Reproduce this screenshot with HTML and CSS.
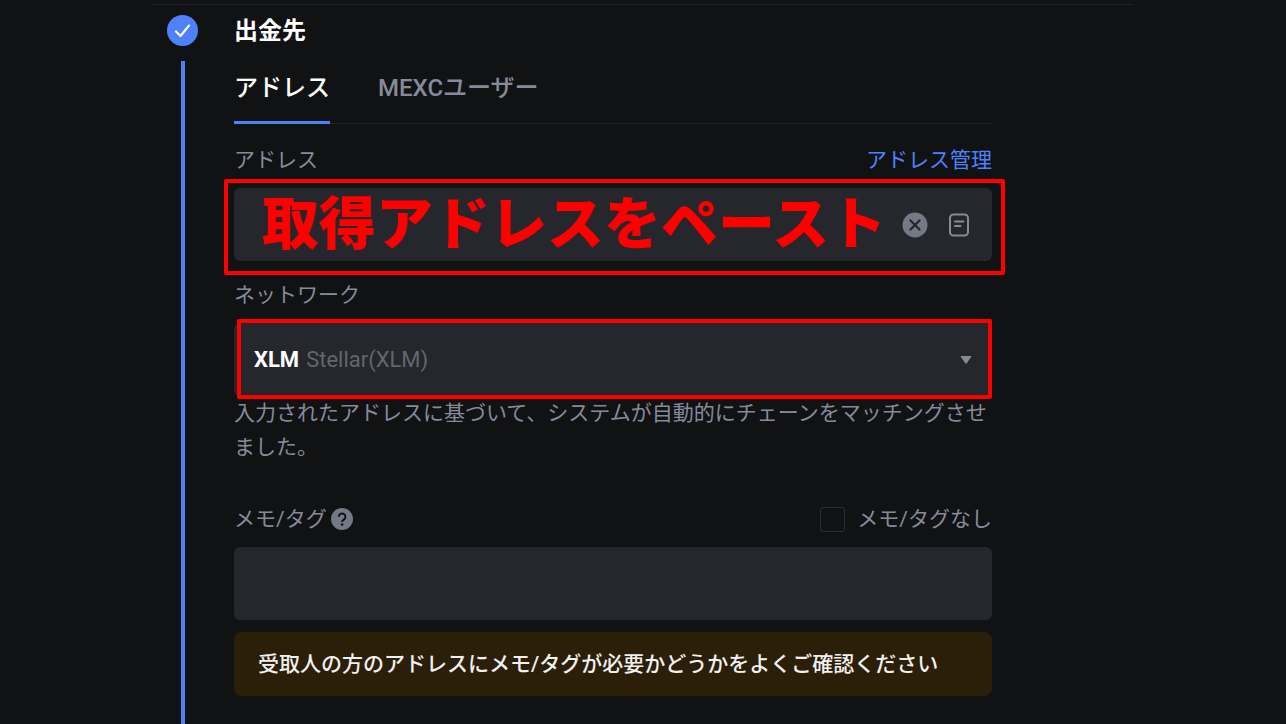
FILE: index.html
```html
<!DOCTYPE html>
<html lang="ja">
<head>
  <meta charset="UTF-8">
  <meta name="viewport" content="width=device-width, initial-scale=1">
  <title>出金</title>
  <link rel="stylesheet" href="styles.css">
</head>
<body>

<main class="page">
  <section class="step">
    <div class="rail">
      <svg class="step-icon" viewBox="0 0 31 31" aria-hidden="true">
        <circle cx="15.5" cy="15.5" r="15.5" fill="#4f81fb"/>
        <path d="M9 16.500l4.500 4.500L22 10.500" fill="none" stroke="#fff" stroke-width="2.100" stroke-linecap="round" stroke-linejoin="round"/>
      </svg>
      <div class="line"></div>
    </div>

    <form class="content">
      <h2>出金先</h2>

      <div class="tabs" role="tablist">
        <button type="button" role="tab" aria-selected="true" class="tab active">アドレス</button>
        <button type="button" role="tab" aria-selected="false" class="tab">MEXCユーザー</button>
      </div>

      <div class="label-row">
        <label for="address">アドレス</label>
        <a href="#">アドレス管理</a>
      </div>
      <div class="field marked marked-wide">
        <input type="text" id="address" class="address-input" value="取得アドレスをペースト">
        <button type="button" class="icon-btn" aria-label="クリア">
          <svg width="26" height="26" viewBox="0 0 26 26">
            <circle cx="13" cy="13" r="12.500" fill="#747986"/>
            <path d="M8.500 8.500l9 9M17.500 8.500l-9 9" stroke="#26272c" stroke-width="2.300" stroke-linecap="round"/>
          </svg>
        </button>
        <button type="button" class="icon-btn" aria-label="アドレス帳">
          <svg width="26" height="26" viewBox="0 0 26 26" fill="none" stroke="#868b99" stroke-width="2" stroke-linecap="round">
            <rect x="4" y="2.500" width="18" height="21" rx="3.500"/>
            <path d="M9 9.500h8.500M9 14h5.500"/>
          </svg>
        </button>
      </div>

      <div class="label-row">
        <label for="network">ネットワーク</label>
      </div>
      <div class="field marked">
        <span class="coin">XLM</span>
        <select id="network" class="network-select">
          <option>Stellar(XLM)</option>
        </select>
        <svg class="arrow" width="12" height="8" viewBox="0 0 12 8" aria-hidden="true">
          <path d="M1 .5h10L6 7.500z" fill="#868b99" stroke="#868b99" stroke-linejoin="round"/>
        </svg>
      </div>
      <p class="hint">入力されたアドレスに基づいて、システムが自動的にチェーンをマッチングさせました。</p>

      <div class="label-row">
        <div class="memo-label">
          <label for="memo">メモ/タグ</label>
          <svg width="22" height="22" viewBox="0 0 22 22" aria-hidden="true">
            <circle cx="11" cy="11" r="11" fill="#747986"/>
            <path d="M7.800 8.800a3.300 3.300 0 1 1 5 2.800c-1.200.8-1.700 1.200-1.700 2.300" fill="none" stroke="#111214" stroke-width="2"/>
            <circle cx="11.100" cy="16.600" r="1.300" fill="#111214"/>
          </svg>
        </div>
        <label class="no-memo"><input type="checkbox">メモ/タグなし</label>
      </div>
      <div class="field">
        <input type="text" id="memo">
      </div>

      <p class="warning">受取人の方のアドレスにメモ/タグが必要かどうかをよくご確認ください</p>
    </form>
  </section>
</main>

</body>
</html>
```
FILE: styles.css
```css
* {
  box-sizing: border-box;
}
body {
  margin: 0;
  background-color: #111214;
  color: #858b9b;
  font-family: Roboto, "Noto Sans CJK JP", sans-serif;
  font-size: 21px;
  line-height: 30px;
}
h2, p {
  margin: 0;
}
button, input, select {
  font: inherit;
  color: inherit;
  background: none;
  border: none;
  padding: 0;
  margin: 0;
  outline: none;
}
button {
  cursor: pointer;
}
.page {
  max-width: 982px;
  margin: 0 auto;
  padding-top: 4px;
}
.step {
  display: flex;
  gap: 36px;
  min-height: calc(100vh - 4px);
  padding: 10px 15px 0;
  border-top: 1px solid #202227;
}
.rail {
  display: flex;
  flex-direction: column;
  align-items: center;
  gap: 15px;
}
.step-icon {
  width: 31px;
  height: 31px;
}
.line {
  flex: 1;
  width: 4px;
  background-color: #4f81fb;
}
.content {
  flex: 1;
  min-width: 0;
  max-width: 758px;
  padding-bottom: 28px;
}
h2 {
  color: #fff;
  font-size: 24px;
  font-weight: 700;
  line-height: 32px;
}

/* tabs */
.tabs {
  display: flex;
  gap: 48px;
  margin-bottom: 21px;
  border-bottom: 1px solid #202227;
}
.tab {
  height: 77px;
  margin-bottom: -1px;
  padding-top: 8px;
  border-bottom: 3px solid transparent;
  font-size: 24px;
  font-weight: 500;
}
.tab.active {
  color: #fff;
  border-bottom-color: #4f81fb;
}

/* fields */
.label-row {
  display: flex;
  justify-content: space-between;
  align-items: center;
  margin-bottom: 13px;
}
.label-row a {
  color: #4f81fb;
  text-decoration: none;
}
.field {
  position: relative;
  display: flex;
  align-items: center;
  height: 73px;
  padding: 0 20px;
  border-radius: 6px;
  background-color: #26272c;
}
.field input {
  flex: 1;
  min-width: 0;
  height: 100%;
}
.marked::after {
  content: "";
  position: absolute;
  inset: -4px 0 -3px 3px;
  border: 4px solid #f00;
  border-radius: 2px;
  pointer-events: none;
}
.marked-wide {
  gap: 18px;
  margin-bottom: 19px;
}
.marked-wide::after {
  inset: -9px -13px -14px -10px;
}
.field .address-input {
  padding: 0 0 12px 8px;
  color: #f00;
  font-size: 57px;
  font-weight: 900;
}
.icon-btn {
  display: flex;
}
.coin {
  margin-right: 7px;
  color: #fff;
  font-size: 22px;
  font-weight: 700;
}
.network-select {
  flex: 1;
  height: 100%;
  appearance: none;
  color: #62666f;
  font-size: 22px;
}
.hint {
  margin-bottom: 40px;
  line-height: 34px;
}
.memo-label {
  display: flex;
  align-items: center;
  gap: 4px;
}
.no-memo {
  display: flex;
  align-items: center;
  gap: 12px;
}
.no-memo input {
  appearance: none;
  width: 25px;
  height: 25px;
  border: 1px solid #2b2d32;
  border-radius: 3px;
}
.warning {
  margin-top: 12px;
  padding: 17px 24px;
  border-radius: 8px;
  background-color: #2b1f09;
  color: #f0f0f0;
  font-weight: 500;
}
```
